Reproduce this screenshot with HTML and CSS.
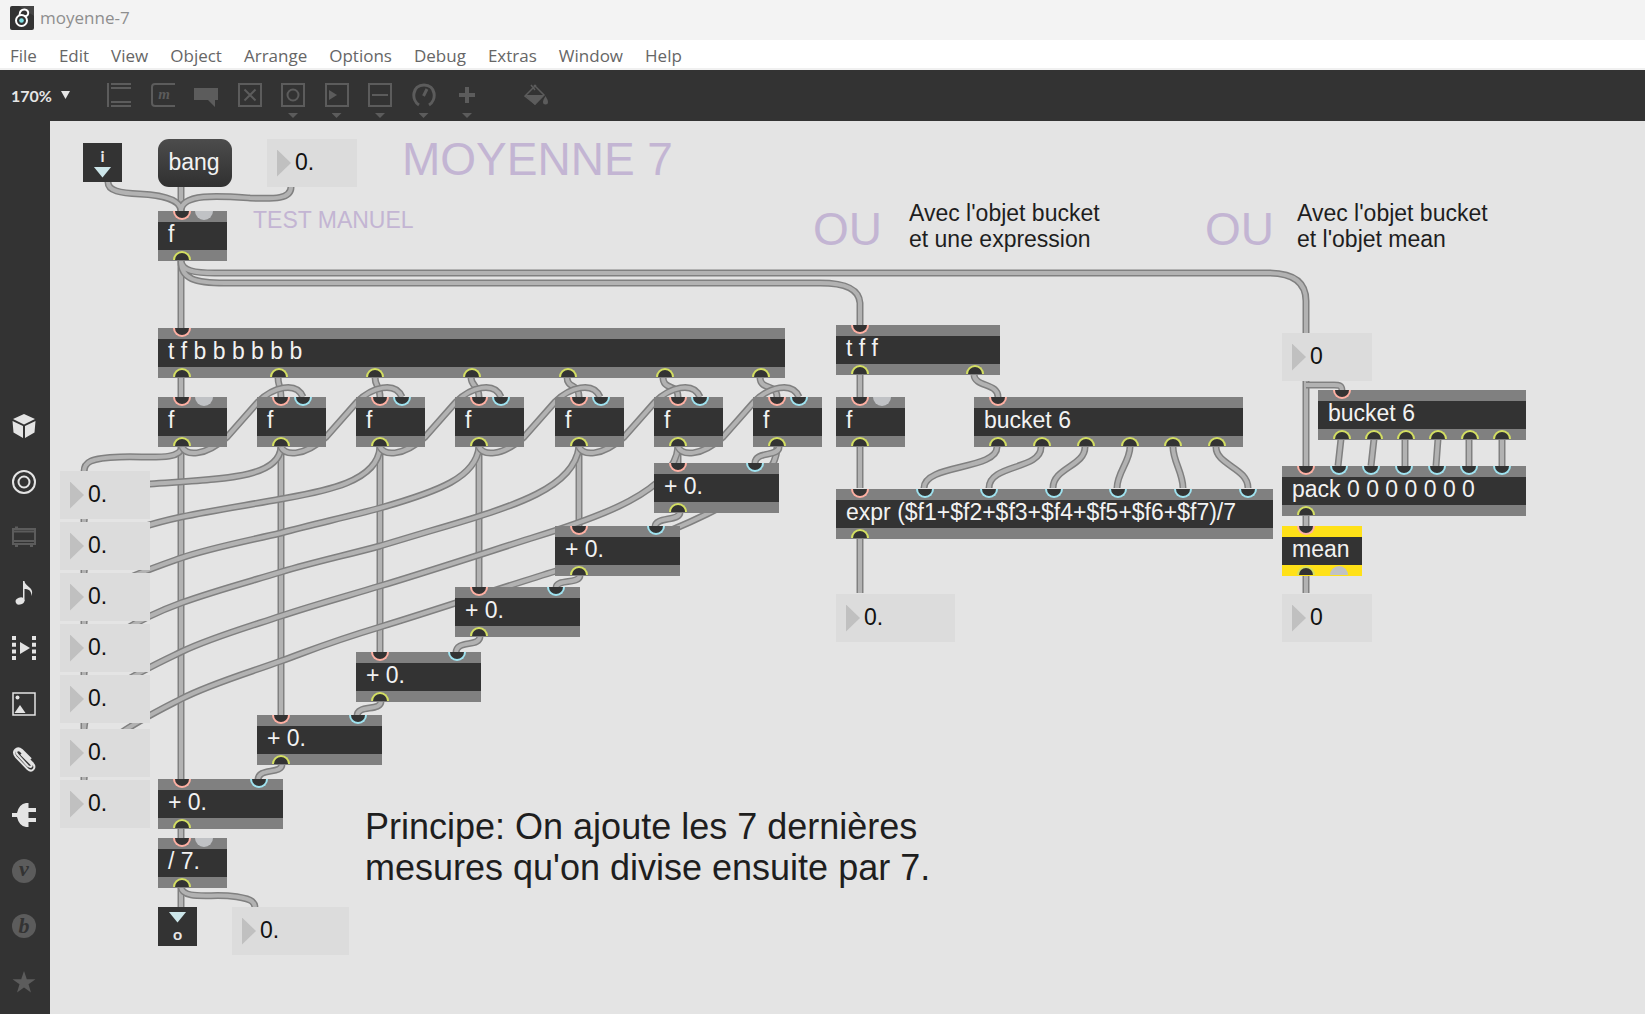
FILE: index.html
```html
<!DOCTYPE html>
<html lang="fr">
<head>
<meta charset="utf-8">
<title>moyenne-7</title>
<link rel="stylesheet" href="styles.css">
</head>
<body>
<header class="titlebar">
  <svg class="logo" viewBox="0 0 24 24" aria-hidden="true">
    <rect width="24" height="24" rx="2" fill="#333"/>
    <path d="M9 0H24V10Z" fill="#444"/>
    <g fill="none" stroke="#fff" stroke-width="2">
      <circle cx="11.5" cy="14.5" r="5.5"/>
      <path d="M9.500 9.500C9.500 5 12 3.500 14.500 3.500C17 3.500 18.500 5.500 18.200 7.500C18 9.500 16.500 10.500 14 10"/>
    </g>
    <circle cx="11.500" cy="14.500" r="2.300" fill="#7fe0e4"/>
  </svg>
  <span>moyenne-7</span>
</header>

<nav class="menubar" aria-label="Menu">
  <button type="button">File</button>
  <button type="button">Edit</button>
  <button type="button">View</button>
  <button type="button">Object</button>
  <button type="button">Arrange</button>
  <button type="button">Options</button>
  <button type="button">Debug</button>
  <button type="button">Extras</button>
  <button type="button">Window</button>
  <button type="button">Help</button>
</nav>

<div class="toolbar">
  <label class="zoom"><select aria-label="Zoom"><option>170%</option></select></label>
  <div class="tools">
    <button type="button" aria-label="Object"><svg viewBox="0 0 24 24"><path d="M1 0V24M4 1H24M4 5H24M4 19H24M4 23H24"/></svg></button>
    <button type="button" aria-label="Message"><svg viewBox="0 0 24 24"><path d="M24 1H4Q1 1 1 4V20Q1 23 4 23H24"/><text class="glyph" x="13" y="16" font-size="15">m</text></svg></button>
    <button type="button" aria-label="Comment"><svg viewBox="0 0 24 24"><path class="solid" d="M0 5H24V17H21V24L14 17H0Z"/></svg></button>
    <button type="button" aria-label="Toggle"><svg viewBox="0 0 24 24"><path d="M1 1H23V23H1ZM6.500 6.500L17.500 17.500M17.500 6.500L6.500 17.500"/></svg></button>
    <button type="button" class="more" aria-label="Button"><svg viewBox="0 0 24 24"><path d="M1 1H23V23H1Z"/><circle cx="12" cy="12" r="5.500"/></svg></button>
    <button type="button" class="more" aria-label="Playback"><svg viewBox="0 0 24 24"><path d="M1 1H23V23H1Z"/><path class="solid" d="M4 7L12 12L4 17Z"/></svg></button>
    <button type="button" class="more" aria-label="Slider"><svg viewBox="0 0 24 24"><path d="M1 1H23V23H1ZM4 12H20"/></svg></button>
    <button type="button" class="more" aria-label="Dial"><svg viewBox="0 0 24 24"><path stroke-width="3" d="M7 22C-1 17 0 2 12 2S25 17 17 22M11.500 13L15 6"/></svg></button>
    <button type="button" class="more" aria-label="Add"><svg viewBox="0 0 24 24"><path stroke-width="4" d="M12 4V20M4 12H20"/></svg></button>
  </div>
  <button type="button" class="fill" aria-label="Format"><svg viewBox="0 0 24 24"><path stroke-width="1.500" d="M7 2L11 7M10 2L20 12L11 21L1 13L12 2"/><path class="solid" d="M1 12H20L11 22ZM21.500 13Q24 17 24 19A2.300 2.300 0 0 1 19 19Q19 17 21.500 13Z"/></svg></button>
</div>

<div class="workspace">
  <aside class="sidebar">
    <button type="button" aria-label="Packages"><svg viewBox="0 0 24 24"><path class="solid" d="M12 0L23 5L12 10.500L1 5ZM0.500 7L11 12V24L1.500 18.500ZM23.500 7L13 12V24L22.500 18.500Z"/></svg></button>
    <button type="button" aria-label="Objects"><svg viewBox="0 0 24 24"><circle cx="12" cy="12" r="11"/><circle cx="12" cy="12" r="5.500"/></svg></button>
    <button type="button" class="off" aria-label="Modules"><svg viewBox="0 0 24 24"><path d="M1 4H23V19H1ZM2 6.500H22M2 16H22M3 2.500H6M3 21H6M18 21H21"/></svg></button>
    <button type="button" aria-label="Audio"><svg viewBox="0 0 24 24"><ellipse class="solid" cx="8" cy="20" rx="4.500" ry="3.500" transform="rotate(-20 8 20)"/><path class="solid" d="M11 0H12.500C13 6 23 6 19.500 15C19.500 9 16 8 12.500 8V20H11Z"/></svg></button>
    <button type="button" aria-label="Video"><svg viewBox="0 0 24 24"><path class="solid" d="M8 6L18 12L8 18Z"/><path stroke-width="4" stroke-dasharray="4 2.700" d="M2 0V24M22 0V24"/></svg></button>
    <button type="button" aria-label="Images"><svg viewBox="0 0 24 24"><path stroke-width="1.500" d="M1 1H23V23H1Z"/><circle class="solid" cx="5.500" cy="5.500" r="2"/><path class="solid" d="M2.500 21L8 13L13.500 21Z"/></svg></button>
    <button type="button" aria-label="Snippets"><svg viewBox="0 0 24 24"><path d="M15 17L5 6C3 3 6 1 8.500 3L20.500 15C25 20 20 25 15.500 21L4 9C-1 3 5 -2 10 2L19 11M5 6L16 18C19 20 21 18 18.500 15.500L9 6"/></svg></button>
    <button type="button" aria-label="Plug-ins"><svg viewBox="0 0 24 24"><path class="solid" d="M0 10H5Q7 1 14 0H16.500V5H24V9H16.500V15H24V19H16.500V24H14Q7 23 5 14H0Z"/></svg></button>
    <button type="button" class="off" aria-label="Vizzie"><svg viewBox="0 0 24 24"><circle class="solid" cx="12" cy="12" r="12"/><text class="cut" x="12" y="17">v</text></svg></button>
    <button type="button" class="off" aria-label="Beap"><svg viewBox="0 0 24 24"><circle class="solid" cx="12" cy="12" r="12"/><text class="cut" x="12" y="19">b</text></svg></button>
    <button type="button" class="off" aria-label="Favorites"><svg viewBox="0 0 24 24"><path class="solid" d="M12 1L14.800 9.300H23.500L16.500 14.300L19 22.500L12 17.500L5 22.500L7.500 14.300L0.500 9.300H9.200Z"/></svg></button>
  </aside>

  <main class="patcher">
    <svg class="cables" aria-hidden="true">
      <defs>
        <path id="straight" d="M131 66V90M131 140V207M131 257V276M131 326V658M231 326V594M330 326V531M429 326V466M529 326V405M628 326V342M131 707V717M131 766V786M810 254V276M810 325V367M810 416V472M1256 260V345M1256 395V405M1256 455V472
          M1291 318L1288 345M1324 318L1321 345M1355 318V345M1388 318L1386 345M1419 318V345M1452 318V345"/>
        <path id="triggers" d="M228 256C228 266 231 264 231 276M325 256C325 266 330 264 330 276M421 256C421 266 429 264 429 276M517 256C517 268 529 262 529 276M613 256C613 270 628 262 628 276M710 256C710 270 727 262 727 276"/>
        <path id="long" d="M131 140C131 158 145 162 175 162H770C796 162 809 168 810 182V204M131 140C132 150 145 152 165 152H1218C1243 152 1256 161 1256 180V212"/>
        <path id="inputs" d="M58 61C58 70 70 72 90 73S131 78 131 90M241 66C241 78 225 78 200 77C170 75 131 72 131 90"/>
        <path id="history" d="M727 326C727 352 700 372 657 393C610 416 560 433 506 450C460 464 380 491 330 506S264 528 231 540S160 563 131 578S34 625 34 659
          M628 326C624 370 550 396 485 416C450 427 380 450 330 465C297 475 264 484 231 495S160 517 131 531S34 575 34 608
          M529 326C524 366 470 384 380 410C363 415 347 420 330 425C297 434 264 441 231 451S164 470 131 482S34 525 34 553
          M429 326C426 356 390 370 330 387C297 396 264 403 231 412C197 420 160 427 131 437C80 455 34 470 34 502
          M330 326C328 362 270 371 231 378C198 384 160 390 131 396C80 407 34 425 34 452
          M231 326C229 358 170 358 100 363C60 367 34 380 34 401
          M132 326C130 340 100 335 70 336S34 341 34 351
          M34 398V401M34 449V452M34 500V503M34 551V554M34 601V608M34 656V659"/>
        <path id="loops" d="M132 326c4 8 21 11 45 -10l31 -35c15 -15 38 -21 45 -5M231 326c4 8 21 11 45 -10l31 -35c15 -15 38 -21 45 -5M330 326c4 8 21 11 45 -10l31 -35c15 -15 38 -21 45 -5M429 326c4 8 21 11 45 -10l31 -35c15 -15 38 -21 45 -5M529 326c4 8 21 11 45 -10l31 -35c15 -15 38 -21 45 -5M628 326c4 8 21 11 45 -10l31 -35c15 -15 38 -21 45 -5"/>
        <path id="sums" d="M729 326C729 336 705 330 705 342M630 391C630 401 605 395 605 406M530 454C530 464 506 457 506 467M430 515C430 527 406 518 406 532M331 580C331 591 307 583 307 595M232 643C232 654 208 646 208 659M131 766C133 779 160 773 180 775S205 780 205 787"/>
        <path id="buckets" d="M924 254C925 266 948 262 948 276M947 326C947 349 874 343 874 367M991 326C991 349 939 343 939 367M1035 326C1035 345 1003 347 1003 367M1080 326C1080 340 1067 352 1067 367M1123 326C1123 340 1133 352 1133 367M1166 326C1166 344 1198 347 1198 367M1256 264H1284C1289 264 1292 264 1292 270"/>
      </defs>
      <use class="edge" href="#straight"/><use class="core" href="#straight"/>
      <use class="edge" href="#long"/><use class="core" href="#long"/>
      <use class="edge" href="#inputs"/><use class="core" href="#inputs"/>
      <use class="edge" href="#history"/><use class="core" href="#history"/>
      <use class="edge" href="#triggers"/><use class="core" href="#triggers"/>
      <use class="edge" href="#loops"/><use class="core" href="#loops"/>
      <use class="edge" href="#sums"/><use class="core" href="#sums"/>
      <use class="edge" href="#buckets"/><use class="core" href="#buckets"/>
    </svg>

    <h1 class="note big" style="--x:352px;--y:12px">MOYENNE 7</h1>
    <p class="note tint" style="--x:203px;--y:86px">TEST MANUEL</p>
    <p class="note big" style="--x:763px;--y:82px">OU</p>
    <p class="note" style="--x:859px;--y:79px">Avec l'objet bucket<br>et une expression</p>
    <p class="note big" style="--x:1155px;--y:82px">OU</p>
    <p class="note" style="--x:1247px;--y:79px">Avec l'objet bucket<br>et l'objet mean</p>
    <p class="note medium" style="--x:315px;--y:685px">Principe: On ajoute les 7 dernières<br>mesures qu'on divise ensuite par 7.</p>

    <div class="port" style="--x:33px;--y:22px">i<i></i></div>
    <button type="button" class="bang" style="--x:108px;--y:18px">bang</button>
    <label class="number" style="--x:217px;--y:18px"><input value="0." aria-label="Valeur de test"></label>

    <div class="box" style="--x:108px;--y:90px;--w:69px">f<i class="in hot" style="--p:24px"></i><i class="in idle" style="--p:46px"></i><i class="out" style="--p:24px"></i></div>

    <div class="box" style="--x:108px;--y:207px;--w:627px">t f b b b b b b<i class="in hot" style="--p:24px"></i><i class="out" style="--p:24px"></i><i class="out" style="--p:121px"></i><i class="out" style="--p:217px"></i><i class="out" style="--p:314px"></i><i class="out" style="--p:410px"></i><i class="out" style="--p:507px"></i><i class="out" style="--p:603px"></i></div>

    <div class="box" style="--x:108px;--y:276px;--w:69px">f<i class="in hot" style="--p:24px"></i><i class="in idle" style="--p:46px"></i><i class="out" style="--p:24px"></i></div>
    <div class="box" style="--x:207px;--y:276px;--w:69px">f<i class="in hot" style="--p:24px"></i><i class="in" style="--p:46px"></i><i class="out" style="--p:24px"></i></div>
    <div class="box" style="--x:306px;--y:276px;--w:69px">f<i class="in hot" style="--p:24px"></i><i class="in" style="--p:46px"></i><i class="out" style="--p:24px"></i></div>
    <div class="box" style="--x:405px;--y:276px;--w:69px">f<i class="in hot" style="--p:24px"></i><i class="in" style="--p:46px"></i><i class="out" style="--p:24px"></i></div>
    <div class="box" style="--x:505px;--y:276px;--w:69px">f<i class="in hot" style="--p:24px"></i><i class="in" style="--p:46px"></i><i class="out" style="--p:24px"></i></div>
    <div class="box" style="--x:604px;--y:276px;--w:69px">f<i class="in hot" style="--p:24px"></i><i class="in" style="--p:46px"></i><i class="out" style="--p:24px"></i></div>
    <div class="box" style="--x:703px;--y:276px;--w:69px">f<i class="in hot" style="--p:24px"></i><i class="in" style="--p:46px"></i><i class="out" style="--p:24px"></i></div>

    <div class="box" style="--x:604px;--y:342px;--w:125px">+ 0.<i class="in hot" style="--p:24px"></i><i class="in" style="--p:101px"></i><i class="out" style="--p:24px"></i></div>
    <div class="box" style="--x:505px;--y:405px;--w:125px">+ 0.<i class="in hot" style="--p:24px"></i><i class="in" style="--p:101px"></i><i class="out" style="--p:24px"></i></div>
    <div class="box" style="--x:405px;--y:466px;--w:125px">+ 0.<i class="in hot" style="--p:24px"></i><i class="in" style="--p:101px"></i><i class="out" style="--p:24px"></i></div>
    <div class="box" style="--x:306px;--y:531px;--w:125px">+ 0.<i class="in hot" style="--p:24px"></i><i class="in" style="--p:101px"></i><i class="out" style="--p:24px"></i></div>
    <div class="box" style="--x:207px;--y:594px;--w:125px">+ 0.<i class="in hot" style="--p:24px"></i><i class="in" style="--p:101px"></i><i class="out" style="--p:24px"></i></div>
    <div class="box" style="--x:108px;--y:658px;--w:125px">+ 0.<i class="in hot" style="--p:24px"></i><i class="in" style="--p:101px"></i><i class="out" style="--p:24px"></i></div>
    <div class="box" style="--x:108px;--y:717px;--w:69px">/ 7.<i class="in hot" style="--p:24px"></i><i class="in idle" style="--p:46px"></i><i class="out" style="--p:24px"></i></div>
    <div class="port" style="--x:108px;--y:786px"><i></i>o</div>
    <label class="number" style="--x:182px;--y:786px;--w:117px"><input value="0." aria-label="Moyenne"></label>

    <label class="number" style="--x:10px;--y:350px"><input value="0." aria-label="Mesure 1"></label>
    <label class="number" style="--x:10px;--y:401px"><input value="0." aria-label="Mesure 2"></label>
    <label class="number" style="--x:10px;--y:452px"><input value="0." aria-label="Mesure 3"></label>
    <label class="number" style="--x:10px;--y:503px"><input value="0." aria-label="Mesure 4"></label>
    <label class="number" style="--x:10px;--y:554px"><input value="0." aria-label="Mesure 5"></label>
    <label class="number" style="--x:10px;--y:608px"><input value="0." aria-label="Mesure 6"></label>
    <label class="number" style="--x:10px;--y:659px"><input value="0." aria-label="Mesure 7"></label>

    <div class="box" style="--x:786px;--y:204px;--w:164px">t f f<i class="in hot" style="--p:24px"></i><i class="out" style="--p:24px"></i><i class="out" style="--p:139px"></i></div>
    <div class="box" style="--x:786px;--y:276px;--w:69px">f<i class="in hot" style="--p:24px"></i><i class="in idle" style="--p:46px"></i><i class="out" style="--p:24px"></i></div>
    <div class="box" style="--x:924px;--y:276px;--w:269px">bucket 6<i class="in hot" style="--p:24px"></i><i class="out" style="--p:24px"></i><i class="out" style="--p:68px"></i><i class="out" style="--p:112px"></i><i class="out" style="--p:156px"></i><i class="out" style="--p:199px"></i><i class="out" style="--p:243px"></i></div>
    <div class="box" style="--x:786px;--y:368px;--w:437px">expr ($f1+$f2+$f3+$f4+$f5+$f6+$f7)/7<i class="in hot" style="--p:24px"></i><i class="in" style="--p:89px"></i><i class="in" style="--p:153px"></i><i class="in" style="--p:218px"></i><i class="in" style="--p:282px"></i><i class="in" style="--p:347px"></i><i class="in" style="--p:412px"></i><i class="out" style="--p:24px"></i></div>
    <label class="number" style="--x:786px;--y:473px;--w:119px"><input value="0." aria-label="Moyenne par expression"></label>

    <label class="number" style="--x:1232px;--y:212px"><input value="0" aria-label="Valeur en entrée"></label>
    <div class="box" style="--x:1268px;--y:269px;--w:208px">bucket 6<i class="in hot" style="--p:24px"></i><i class="out" style="--p:24px"></i><i class="out" style="--p:56px"></i><i class="out" style="--p:88px"></i><i class="out" style="--p:120px"></i><i class="out" style="--p:152px"></i><i class="out" style="--p:184px"></i></div>
    <div class="box" style="--x:1232px;--y:345px;--w:244px">pack 0 0 0 0 0 0 0<i class="in hot" style="--p:24px"></i><i class="in" style="--p:57px"></i><i class="in" style="--p:89px"></i><i class="in" style="--p:122px"></i><i class="in" style="--p:155px"></i><i class="in" style="--p:187px"></i><i class="in" style="--p:220px"></i><i class="out" style="--p:24px"></i></div>
    <div class="box selected" style="--x:1232px;--y:405px;--w:80px">mean<i class="in hot" style="--p:24px"></i><i class="out" style="--p:24px"></i><i class="out idle" style="--p:57px"></i></div>
    <label class="number" style="--x:1232px;--y:473px"><input value="0" aria-label="Moyenne par mean"></label>
  </main>
</div>
</body>
</html>
```
FILE: styles.css
```css
* {
  box-sizing: border-box;
}

body {
  margin: 0;
  min-height: 100vh;
  display: flex;
  flex-direction: column;
  font-family: "Open Sans", "Noto Sans", sans-serif;
  font-size: 17px;
}

button,
input,
select {
  font: inherit;
  color: inherit;
  margin: 0;
  padding: 0;
  border: 0;
  background: none;
}

/* Window title and menu */

.titlebar {
  display: flex;
  align-items: center;
  gap: 6px;
  height: 40px;
  padding: 0 10px 5px;
  background: #f3f3f3;
  color: #8e8e8e;
}

.logo {
  width: 24px;
  height: 24px;
}

.menubar {
  display: flex;
  align-items: center;
  gap: 22px;
  height: 30px;
  padding: 2px 10px 0;
  background: #fff;
  border-bottom: 2px solid #f0f0f0;
  color: #666;
}

/* Top toolbar */

.toolbar {
  display: flex;
  align-items: flex-start;
  height: 51px;
  padding: 13px 11px 0;
  background: #333;
  color: #5c5c5c;
}

.zoom {
  display: flex;
  align-items: center;
  gap: 9px;
  width: 96px;
  height: 24px;
  font-family: Lato, sans-serif;
  font-size: 16px;
  font-weight: 700;
  color: #e6e6e6;
}

.zoom select {
  appearance: none;
}

.zoom::after {
  content: "";
  width: 9px;
  height: 8px;
  background: #e6e6e6;
  clip-path: polygon(0 0, 100% 0, 50% 100%);
}

.tools {
  display: flex;
  align-items: flex-start;
  justify-content: space-between;
  width: 372px;
}

.fill {
  margin-left: 45px;
}

.toolbar svg,
.sidebar svg {
  display: block;
  width: 24px;
  height: 24px;
  fill: none;
  stroke: currentColor;
  stroke-width: 2;
}

.toolbar .solid,
.sidebar .solid {
  fill: currentColor;
  stroke: none;
}

.more::after {
  content: "";
  display: block;
  width: 10px;
  height: 5px;
  margin: 6px auto 0;
  background: currentColor;
  clip-path: polygon(0 0, 100% 0, 50% 100%);
}

.glyph,
.cut {
  font-family: "Liberation Serif", serif;
  font-style: italic;
  font-weight: 700;
  text-anchor: middle;
  stroke: none;
}

.glyph {
  fill: currentColor;
}

.cut {
  font-size: 22px;
  fill: #333;
}

/* Sidebar and patcher */

.workspace {
  flex: 1;
  display: flex;
}

.sidebar {
  display: grid;
  grid-template-rows: repeat(11, 24px);
  align-content: space-between;
  width: 50px;
  padding: 293px 13px 20px 12px;
  background: #333;
  color: #e4e4e4;
}

.sidebar svg {
  overflow: visible;
}

.sidebar .off {
  color: #5c5c5c;
}

.patcher {
  flex: 1;
  position: relative;
  overflow: hidden;
  background: #e4e4e4;
  font-family: "Liberation Sans", Arial, sans-serif;
  font-size: 23px;
}

.cables {
  position: absolute;
  inset: 0;
  width: 100%;
  height: 100%;
  fill: none;
}

.edge {
  stroke: #808080;
  stroke-width: 7px;
}

.core {
  stroke: #b2b2b2;
  stroke-width: 4px;
}

.note,
.box,
.port,
.bang,
.number {
  position: absolute;
  left: var(--x);
  top: var(--y);
  white-space: nowrap;
}

.note {
  margin: 0;
  line-height: 26px;
  color: #1e1e1e;
}

.tint,
.big {
  color: #c3b5d3;
}

.big {
  font-size: 46px;
  font-weight: 400;
  line-height: 52px;
}

.medium {
  font-size: 36px;
  line-height: 41px;
}

.box {
  width: var(--w);
  height: 50px;
  padding: 0 10px;
  border: solid #808080;
  border-width: 11px 0;
  background: #333;
  color: #f2f2f2;
  line-height: 24px;
}

.selected {
  border-color: #ffe118;
}

.in,
.out {
  position: absolute;
  left: calc(var(--p) - 9px);
  width: 18px;
  height: 9px;
  background: #333;
}

.in {
  top: -11px;
  border: 2px solid #9fe3f0;
  border-top: 0;
  border-radius: 0 0 9px 9px;
}

.in.hot {
  border-color: #ffb0a3;
}

.out {
  bottom: -10px;
  border: 2px solid #d4df62;
  border-bottom: 0;
  border-radius: 9px 9px 0 0;
}

.idle {
  background: #c0c2c5;
  border-color: #c0c2c5;
}

.port {
  display: flex;
  flex-direction: column;
  align-items: center;
  justify-content: center;
  gap: 3px;
  width: 39px;
  height: 39px;
  background: #333;
  color: #e8e8e8;
  font-family: Lato, sans-serif;
  font-size: 16px;
  font-weight: 700;
  line-height: 16px;
}

.port i {
  width: 18px;
  height: 11px;
  background: #cde6ea;
  clip-path: polygon(0 0, 100% 0, 50% 100%);
}

.bang {
  width: 74px;
  height: 48px;
  padding: 0 2px 2px 0;
  border-radius: 11px;
  background: linear-gradient(#4c4c4c, #303030);
  color: #f2f2f2;
}

.number {
  display: flex;
  align-items: center;
  width: var(--w, 90px);
  height: 48px;
  padding-left: 10px;
  background: #dcdcdc;
  color: #111;
}

.number::before {
  content: "";
  flex: none;
  width: 14px;
  height: 27px;
  background: #c0c0c0;
  clip-path: polygon(0 0, 100% 50%, 0 100%);
}

.number input {
  flex: 1;
  min-width: 0;
  height: 48px;
  padding: 0 0 2px 4px;
}
```
